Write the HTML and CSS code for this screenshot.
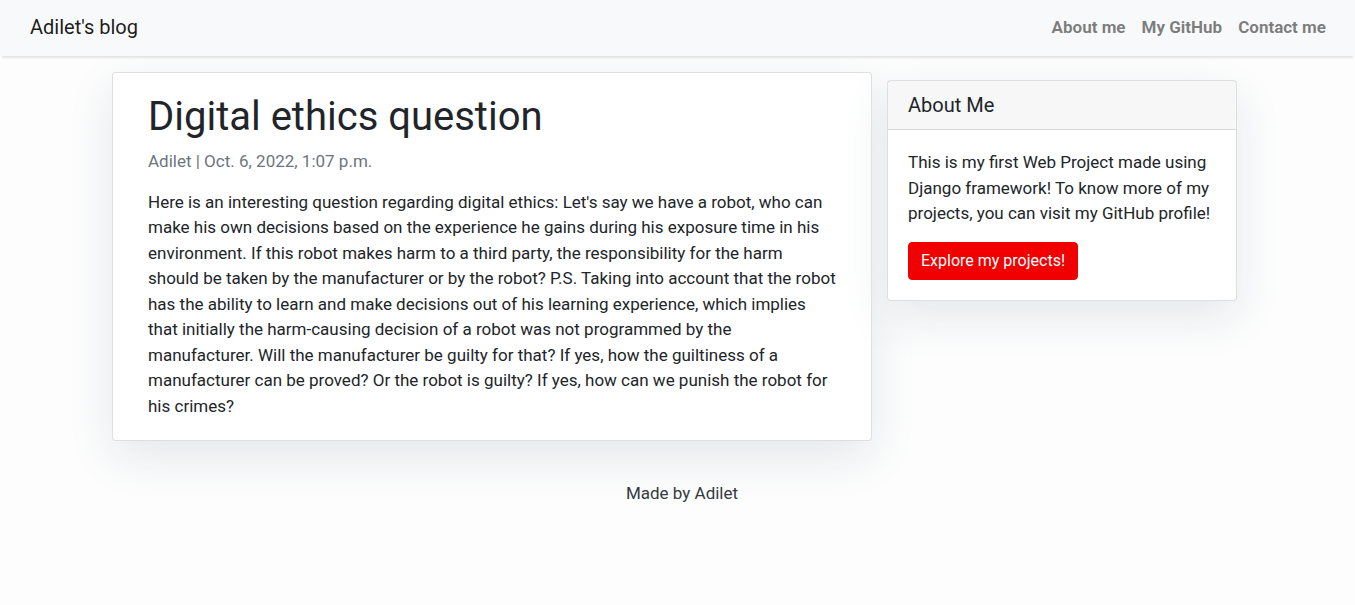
FILE: index.html
```
<!DOCTYPE html>
<html lang="en">
<head>
<meta charset="utf-8">
<title>Digital ethics question</title>
<link rel="stylesheet" href="styles.css">
</head>
<body>
<nav class="navbar">
  <a class="brand" href="#">Adilet's blog</a>
  <ul class="nav">
    <li><a class="nav-link" href="#">About me</a></li>
    <li><a class="nav-link" href="#">My GitHub</a></li>
    <li><a class="nav-link" href="#">Contact me</a></li>
  </ul>
</nav>
<div class="container">
  <div class="post card">
    <div class="card-body">
      <h1 class="title">Digital ethics question</h1>
      <p class="meta">Adilet | Oct. 6, 2022, 1:07 p.m.</p>
      <p class="content">Here is an interesting question regarding digital ethics: Let's say we have a robot, who can make his own decisions based on the experience he gains during his exposure time in his environment. If this robot makes harm to a third party, the responsibility for the harm should be taken by the manufacturer or by the robot? P.S. Taking into account that the robot has the ability to learn and make decisions out of his learning experience, which implies that initially the harm-causing decision of a robot was not programmed by the manufacturer. Will the manufacturer be guilty for that? If yes, how the guiltiness of a manufacturer can be proved? Or the robot is guilty? If yes, how can we punish the robot for his crimes?</p>
    </div>
  </div>
  <div class="side">
    <div class="card">
      <h5 class="card-header">About Me</h5>
      <div class="side-body">
        <p class="side-text">This is my first Web Project made using Django framework! To know more of my projects, you can visit my GitHub profile!</p>
        <a class="btn" href="#">Explore my projects!</a>
      </div>
    </div>
  </div>
</div>
<footer class="footer">
  <p>Made by Adilet</p>
</footer>
</body>
</html>
```
FILE: styles.css
```
* { box-sizing: border-box; }
html, body { margin: 0; padding: 0; }
body {
  font-family: Roboto, "Liberation Sans", sans-serif;
  font-size: 17px;
  line-height: 1.5;
  color: #212529;
  background-color: #fdfdfd;
}
a { text-decoration: none; }
p { margin: 0 0 16px 0; }

.navbar {
  display: flex;
  align-items: center;
  justify-content: space-between;
  background-color: #f8f9fa;
  padding: 6px 21px 8px 30px;
  box-shadow: 0 4px 2px -2px rgba(0,0,0,0.1);
  position: relative;
  z-index: 2;
  height: 56px;
}
.brand {
  font-size: 20px;
  line-height: 30px;
  padding: 5px 0;
  color: rgba(0,0,0,0.9);
}
.nav {
  display: flex;
  list-style: none;
  margin: 0;
  padding: 0;
}
.nav-link {
  display: block;
  padding: 8px;
  font-weight: 700;
  color: rgba(0,0,0,0.5);
  font-size: 17px;
  line-height: 25px;
}

.container {
  width: 1140px;
  margin-left: 112px;
  display: flex;
  align-items: flex-start;
}
.card {
  background: #fff;
  border: 1px solid rgba(0,0,0,0.125);
  border-radius: 4px;
  box-shadow: 0 16px 48px #E3E7EB;
}
.post {
  width: 760px;
  margin-top: 16px;
  margin-bottom: 24px;
  padding: 0 15px;
}
.card-body { padding: 20px 20px 21px; }
.title {
  font-size: 40px;
  font-weight: 400;
  line-height: 1.2;
  margin: 0 0 8px 0;
}
.meta { color: #6c757d; margin-bottom: 15px; }
.content { margin-bottom: 0; }

.side {
  width: 380px;
  padding: 0 15px;
  margin-top: 24px;
}
.card-header {
  margin: 0;
  font-size: 20px;
  font-weight: 400;
  line-height: 1.2;
  padding: 12px 20px;
  background-color: rgba(0,0,0,0.03);
  border-bottom: 1px solid rgba(0,0,0,0.125);
}
.side-body { padding: 20px; }
.side-text { margin-bottom: 15px; }
.btn {
  display: inline-block;
  font-size: 16px;
  line-height: 24px;
  padding: 6px 12px;
  color: #fff;
  background-color: #f00000;
  border: 1px solid #f00000;
  border-radius: 4px;
}

.footer {
  padding: 16px 0 16px 9px;
  text-align: center;
}
.footer p {
  margin: 0;
  color: #343a40;
}
```
